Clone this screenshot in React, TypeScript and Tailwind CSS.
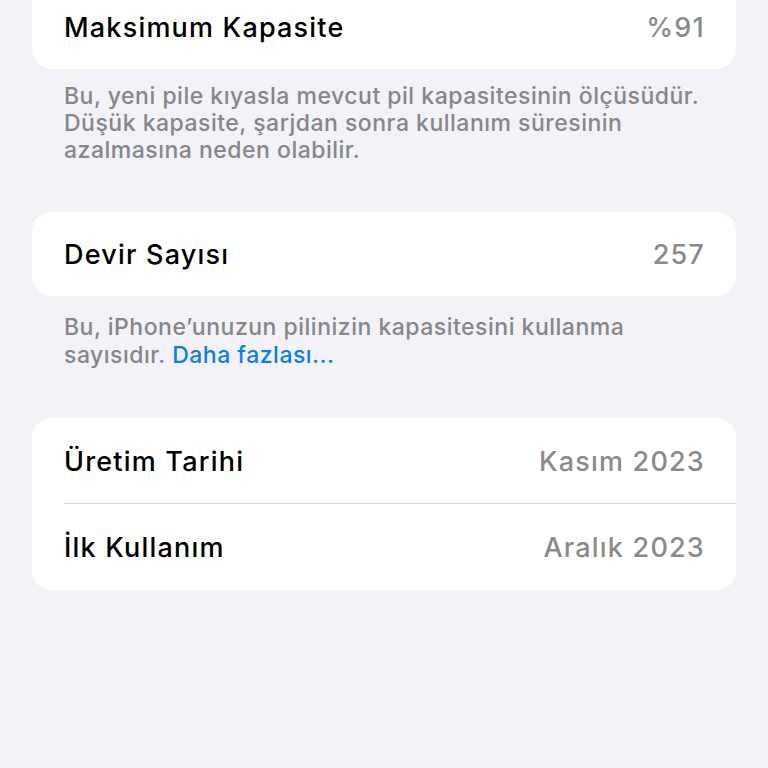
import React from "react";

const font = { fontFamily: "Inter, 'Noto Sans', 'Liberation Sans', sans-serif" };

function Row({ label, value, h = "h-[84px]" }: { label: string; value: string; h?: string }) {
  return (
    <div className={`flex ${h} items-center justify-between pt-[3px]`}>
      <span className="text-[27px] font-medium tracking-[1.2px] text-black">{label}</span>
      <span className="text-[27px] font-medium tracking-[1.2px] text-[#8a8a8e]">{value}</span>
    </div>
  );
}

export default function App() {
  return (
    <div className="h-[768px] w-[768px] overflow-hidden bg-[#f2f2f7] px-8" style={font}>
      <div className="mt-[-15px] rounded-[20px] bg-white pl-8 pr-[31px]">
        <Row label="Maksimum Kapasite" value="%91" />
      </div>
      <p className="mt-[14px] px-8 text-[23px] font-medium leading-[27px] tracking-[0.5px] text-[#86868b]">
        Bu, yeni pile kıyasla mevcut pil kapasitesinin ölçüsüdür.
        <br />
        Düşük kapasite, şarjdan sonra kullanım süresinin
        <br />
        azalmasına neden olabilir.
      </p>

      <div className="mt-[48px] rounded-[20px] bg-white pl-8 pr-[31px]">
        <Row label="Devir Sayısı" value="257" />
      </div>
      <p className="mt-[17px] px-8 text-[23px] font-medium leading-[28px] tracking-[0.5px] text-[#86868b]">
        Bu, iPhone’unuzun pilinizin kapasitesini kullanma
        <br />
        sayısıdır. <span className="text-[#0a7aff]">Daha fazlası...</span>
      </p>

      <div className="mt-[49px] rounded-[20px] bg-white pl-8">
        <div className="pr-[31px]">
          <Row label="Üretim Tarihi" value="Kasım 2023" h="h-[85px]" />
        </div>
        <div className="h-px bg-[#d8d8dc]" />
        <div className="pr-[31px]">
          <Row label="İlk Kullanım" value="Aralık 2023" h="h-[86px]" />
        </div>
      </div>
    </div>
  );
}
